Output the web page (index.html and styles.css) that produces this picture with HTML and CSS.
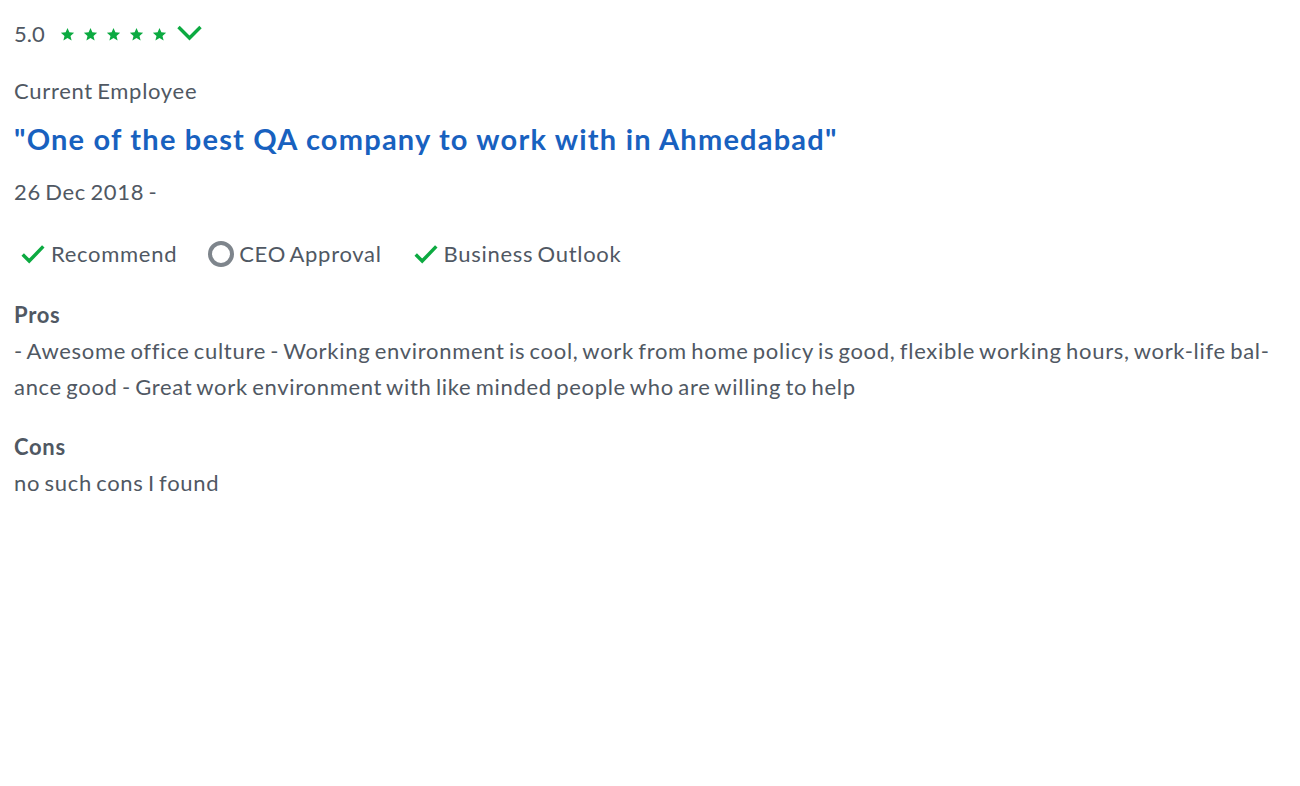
FILE: index.html
```html
<!DOCTYPE html>
<html lang="en">
<head>
<meta charset="utf-8">
<link rel="stylesheet" href="styles.css">
</head>
<body>
<div class="review">
  <div class="rating-row">
    <span class="score">5.0</span>
    <span class="stars">
      <svg viewBox="0 0 24 24" class="star"><path d="M12 1.5l3 7 7.6.7-5.8 5 1.8 7.5L12 17.7l-6.6 4 1.8-7.5-5.8-5 7.6-.7z"/></svg>
      <svg viewBox="0 0 24 24" class="star"><path d="M12 1.5l3 7 7.6.7-5.8 5 1.8 7.5L12 17.7l-6.6 4 1.8-7.5-5.8-5 7.6-.7z"/></svg>
      <svg viewBox="0 0 24 24" class="star"><path d="M12 1.5l3 7 7.6.7-5.8 5 1.8 7.5L12 17.7l-6.6 4 1.8-7.5-5.8-5 7.6-.7z"/></svg>
      <svg viewBox="0 0 24 24" class="star"><path d="M12 1.5l3 7 7.6.7-5.8 5 1.8 7.5L12 17.7l-6.6 4 1.8-7.5-5.8-5 7.6-.7z"/></svg>
      <svg viewBox="0 0 24 24" class="star"><path d="M12 1.5l3 7 7.6.7-5.8 5 1.8 7.5L12 17.7l-6.6 4 1.8-7.5-5.8-5 7.6-.7z"/></svg>
    </span>
    <svg class="chevron" viewBox="0 0 26 16"><path d="M2 2l11 11L24 2" fill="none" stroke="#0caa41" stroke-width="3.4"/></svg>
  </div>
  <div class="status">Current Employee</div>
  <h2 class="title">"One of the best QA company to work with in Ahmedabad"</h2>
  <div class="date">26 Dec 2018 -</div>
  <div class="opinions">
    <span class="opinion"><svg class="check" viewBox="0 0 24 24"><path d="M2.5 12.5l6 6L21.5 5" fill="none" stroke="#0caa41" stroke-width="3.2"/></svg>Recommend</span>
    <span class="opinion"><span class="ring"></span>CEO Approval</span>
    <span class="opinion"><svg class="check" viewBox="0 0 24 24"><path d="M2.5 12.5l6 6L21.5 5" fill="none" stroke="#0caa41" stroke-width="3.2"/></svg>Business Outlook</span>
  </div>
  <div class="section pros">
    <div class="label">Pros</div>
    <p class="text">- Awesome office culture - Working environment is cool, work from home policy is good, flexible working hours, work-life bal&shy;ance good - Great work environment with like minded people who are willing to help</p>
  </div>
  <div class="section cons">
    <div class="label">Cons</div>
    <p class="text">no such cons I found</p>
  </div>
</div>
</body>
</html>
```
FILE: styles.css
```css
* { box-sizing: border-box; }
body {
  margin: 0;
  background: #fff;
  font-family: Lato, "Open Sans", sans-serif;
  color: #505863;
  font-size: 22px;
  letter-spacing: 0.7px;
  word-spacing: -2px;
}
.review {
  padding: 14px 14px 0 14px;
}
.rating-row {
  display: flex;
  align-items: center;
  height: 38px;
}
.score {
  color: #505863;
  margin-right: 15px;
  letter-spacing: 0;
}
.stars {
  display: flex;
  gap: 8px;
  margin-top: 2px;
}
.star {
  width: 15px;
  height: 15px;
  fill: #0caa41;
}
.chevron {
  width: 27px;
  height: 16px;
  margin-left: 9px;
  margin-top: 0;
}
.status {
  margin-top: 21px;
  line-height: 36px;
}
.title {
  margin: 8px 0 0;
  font-size: 29px;
  font-weight: 700;
  color: #1861bf;
  line-height: 44px;
  letter-spacing: 1.2px;
  word-spacing: 0;
}
.date {
  margin-top: 13px;
  line-height: 36px;
}
.opinions {
  display: flex;
  gap: 31px;
  margin-top: 26px;
  line-height: 36px;
  padding-left: 6px;
}
.opinion {
  display: flex;
  align-items: center;
  gap: 5px;
}
.check {
  width: 26px;
  height: 26px;
}
.ring {
  width: 26px;
  height: 26px;
  border: 4px solid #7e858c;
  border-radius: 50%;
}
.pros {
  margin-top: 25px;
}
.cons {
  margin-top: 24px;
}
.label {
  font-weight: 700;
  line-height: 36px;
}
.text {
  margin: 0;
  line-height: 36px;
  hyphens: manual;
}
```
